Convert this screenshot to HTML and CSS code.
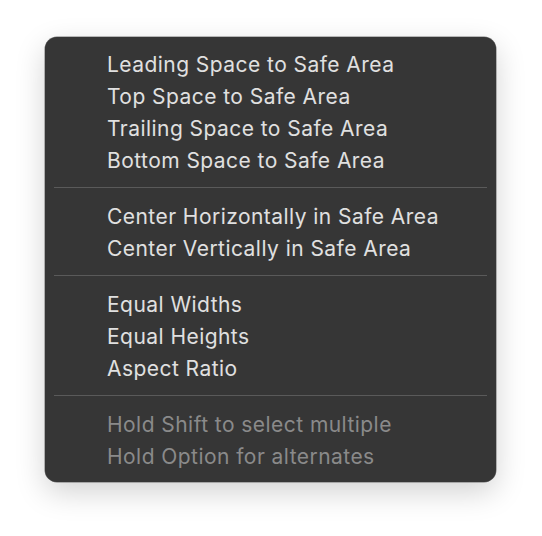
FILE: index.html
```html
<!DOCTYPE html>
<html>
<head>
<meta charset="utf-8">
<link rel="stylesheet" href="styles.css">
</head>
<body>
<div class="menu">
  <div class="item">Leading Space to Safe Area</div>
  <div class="item">Top Space to Safe Area</div>
  <div class="item">Trailing Space to Safe Area</div>
  <div class="item">Bottom Space to Safe Area</div>
  <div class="sep"></div>
  <div class="item">Center Horizontally in Safe Area</div>
  <div class="item">Center Vertically in Safe Area</div>
  <div class="sep"></div>
  <div class="item">Equal Widths</div>
  <div class="item">Equal Heights</div>
  <div class="item">Aspect Ratio</div>
  <div class="sep"></div>
  <div class="item disabled">Hold Shift to select multiple</div>
  <div class="item disabled">Hold Option for alternates</div>
</div>
</body>
</html>
```
FILE: styles.css
```css
html, body {
  margin: 0;
  padding: 0;
  background: #ffffff;
}
body {
  padding: 37px 0 54px 45px;
  min-height: 536px;
  box-sizing: border-box;
  font-family: Inter, "Noto Sans", sans-serif;
}
.menu {
  width: 451px;
  height: 445px;
  box-sizing: border-box;
  background: #363636;
  border-radius: 12px;
  box-shadow: 0 10px 30px rgba(0,0,0,0.18), 0 0 0 0.5px rgba(0,0,0,0.5);
  padding: 11px 0 10px 0;
}
.item {
  height: 32px;
  line-height: 34px;
  padding-left: 62px;
  font-size: 21px;
  letter-spacing: 0.45px;
  color: #e0e0e0;
  white-space: nowrap;
  overflow: hidden;
}
.item.disabled {
  color: #8a8a8a;
}
.sep {
  height: 1px;
  background: #5a5a5a;
  margin: 11px 9px 12px 9px;
}
```
